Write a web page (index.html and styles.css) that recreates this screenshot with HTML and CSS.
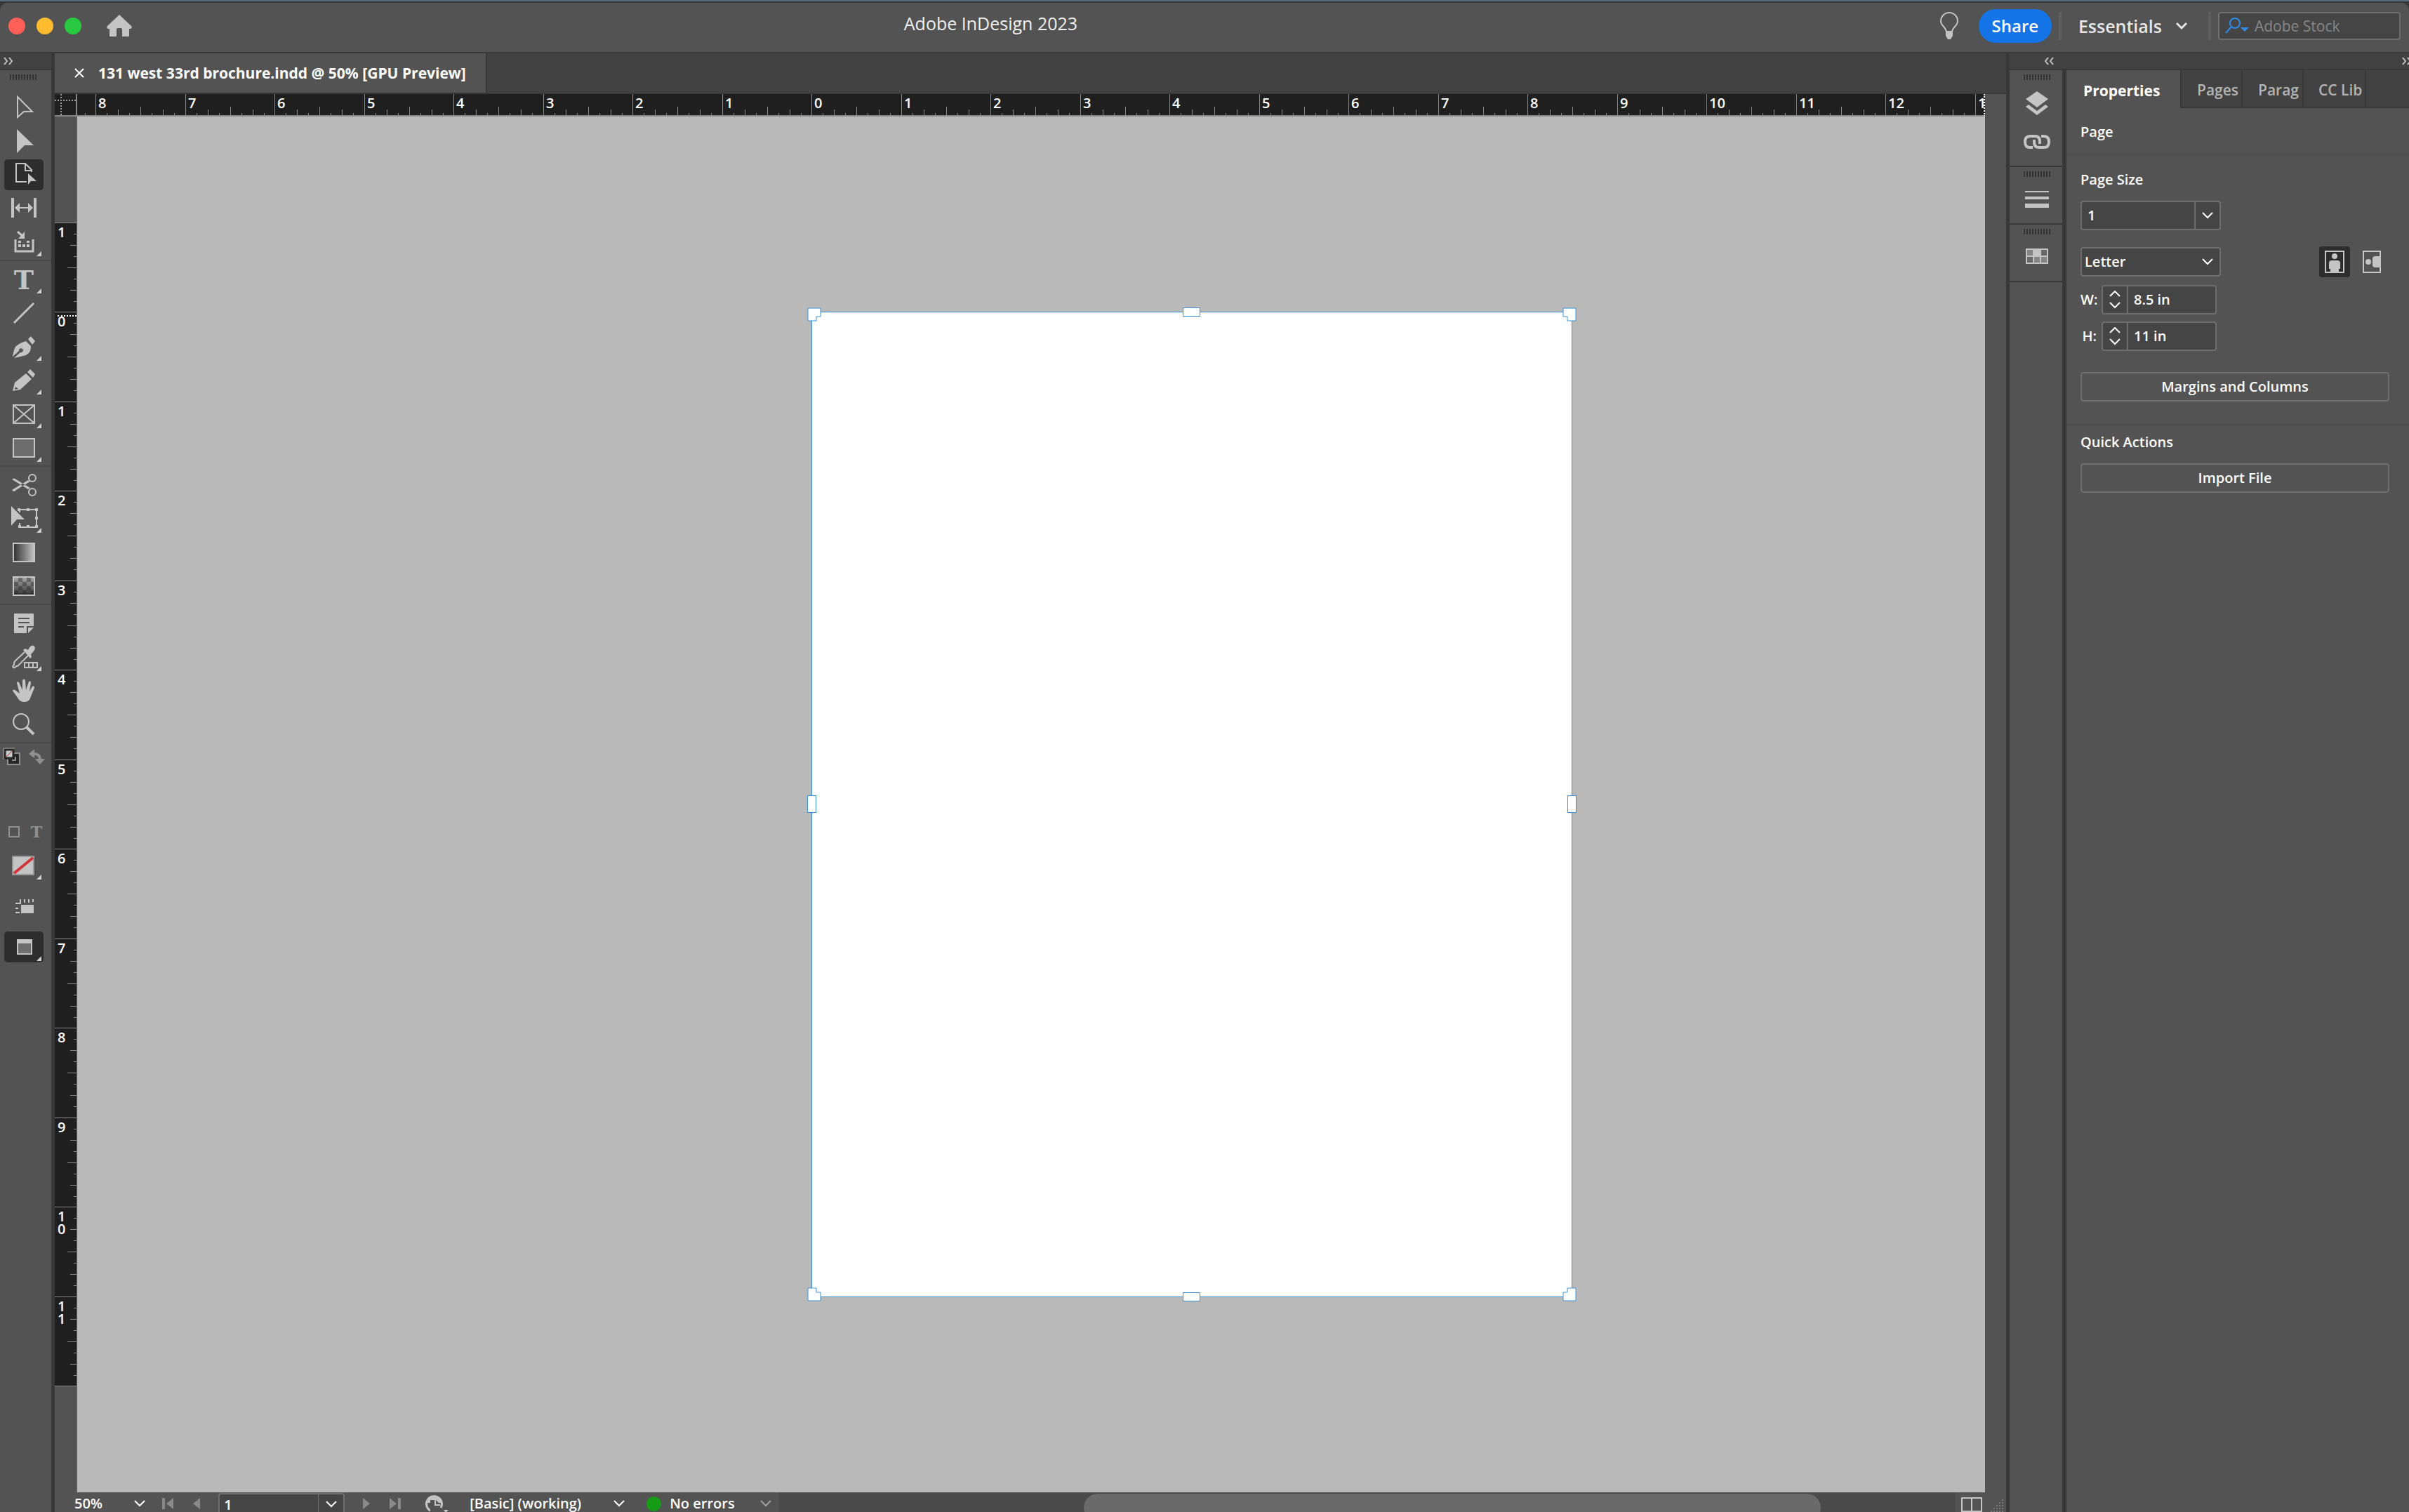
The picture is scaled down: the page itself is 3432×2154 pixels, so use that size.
FILE: index.html
```html
<!DOCTYPE html>
<html lang="en">
<head>
    <meta charset="UTF-8">
    <meta name="viewport" content="width=device-width, initial-scale=1.0">
    <title>Adobe InDesign 2023</title>
    <link rel="stylesheet" href="styles.css">
</head>
<body>
    <!-- Title bar -->
    <header class="titlebar">
        <div class="lights"><span class="light red"></span><span class="light yellow"></span><span class="light green"></span></div>
        <button class="icon-btn" aria-label="Home">
            <svg width="36" height="32" viewBox="0 0 36 32"><path fill="#c4c4c4" d="M18 0 35 16q2 3-1 4H32V30q0 1-1 1H23q-1 0-1-1V21q0-2-2-2H16q-2 0-2 2V30q0 1-1 1H5q-1 0-1-1V20H2q-3-1-1-4z"/></svg>
        </button>
        <h1 class="app-title">Adobe InDesign 2023</h1>
        <div class="titlebar-right">
            <button class="icon-btn bulb" aria-label="Learn">
                <svg width="28" height="40" viewBox="0 0 28 40"><path fill="none" stroke="#c4c4c4" stroke-width="2" d="M10 28C9 21 2 20 2 13a12 12 0 0 1 24 0C26 20 19 21 18 28z"/><path fill="#c4c4c4" d="M9 27H19V34L16 39H12L9 34z"/></svg>
            </button>
            <button class="share">Share</button>
            <span class="bar-line"></span>
            <button class="workspace">Essentials
                <svg width="16" height="12" viewBox="0 0 16 12"><path fill="none" stroke="#e6e6e6" stroke-width="3" d="M1 2 8 9 15 2"/></svg>
            </button>
            <span class="bar-line"></span>
            <label class="stock">
                <svg width="36" height="26" viewBox="0 0 36 26"><circle cx="14" cy="9" r="7" fill="none" stroke="#2d8ceb" stroke-width="2"/><path stroke="#2d8ceb" stroke-width="2" d="M9 14 1 23"/><path fill="#2d8ceb" d="M22 15H34L28 21z"/></svg>
                <input type="text" placeholder="Adobe Stock" aria-label="Adobe Stock">
            </label>
        </div>
    </header>

    <main class="workarea">
        <!-- Tools -->
        <nav class="tools" aria-label="Tools">
            <div class="strip"><svg width="14" height="12" viewBox="0 0 14 12"><path class="thin" d="M1 1 5 6 1 11M8 1 12 6 8 11"/></svg></div>
            <div class="grip"></div>
            <div class="tool-group first">
                <button class="tool" aria-label="Selection"><svg viewBox="0 0 56 44"><path class="ln" stroke-width="2" d="M19 7V36L28 28H40z"/></svg></button>
                <button class="tool" aria-label="Direct selection"><svg viewBox="0 0 56 44"><path class="fl" d="M18 5V39L29 28H42z"/></svg></button>
                <button class="tool active" aria-label="Page"><svg viewBox="0 0 56 44"><path class="ln" stroke-width="2" d="M32 32H17V6H30L39 15V18M30 6V16H40"/><path class="fl" d="M34 20V36L38 31H46z"/></svg></button>
                <button class="tool" aria-label="Gap"><svg viewBox="0 0 56 44"><path class="fl" d="M10 7H14V35H10zM42 7H46V35H42zM15 21 22 14V28zM41 21 34 14V28z"/><path class="ln" stroke-width="2" d="M20 21H36"/></svg></button>
                <button class="tool has-more" aria-label="Content collector"><svg viewBox="0 0 56 44"><path class="ln" stroke-width="3" d="M16 18V35H41V18M19 7 27 14"/><path class="fl" d="M29 7V17H20zM20 25H24V29H20zM26 25H30V29H26zM32 25H36V29H32zM20 20H24V23H20zM32 20H36V23H32z"/></svg></button>
            </div>
            <div class="tool-group">
                <button class="tool has-more" aria-label="Type"><svg viewBox="0 0 56 44"><text class="glyph" x="28" y="36" font-size="38">T</text></svg></button>
                <button class="tool" aria-label="Line"><svg viewBox="0 0 56 44"><path class="ln" stroke-width="3" d="M14 36 42 8"/></svg></button>
                <button class="tool has-more" aria-label="Pen"><svg viewBox="0 0 56 44"><path class="fl" d="M12 35C14 28 14 24 17 21Q23 16 31 14L38 21C38 28 36 31 31 34Q24 36 14 38L23 30A3 3 0 1 0 21 28L12 36zM34 11 38 7 44 14 40 19z"/></svg></button>
                <button class="tool has-more" aria-label="Pencil"><svg viewBox="0 0 56 44"><path class="fl" fill-rule="evenodd" d="M12 37 15 25 31 12 39 20 23 35zM16 31 15 35 20 34zM33 10 37 6 44 13 41 18z"/></svg></button>
                <button class="tool has-more" aria-label="Rectangle frame"><svg viewBox="0 0 56 44"><path class="ln" stroke-width="2" d="M13 9H43V35H13zL43 35M43 9 13 35"/></svg></button>
                <button class="tool has-more" aria-label="Rectangle"><svg viewBox="0 0 56 44"><path class="box" stroke-width="2" d="M13 9H43V35H13z"/></svg></button>
            </div>
            <div class="tool-group">
                <button class="tool" aria-label="Scissors"><svg viewBox="0 0 56 44"><path class="fl" d="M11 14Q14 11 17 14L37 26 34 28zM11 29Q14 33 17 29L37 17 34 15z"/><circle class="ln" stroke-width="2" cx="40" cy="12" r="5"/><circle class="ln" stroke-width="2" cx="40" cy="32" r="5"/></svg></button>
                <button class="tool has-more" aria-label="Free transform"><svg viewBox="0 0 56 44"><path class="ln" stroke-width="2" d="M21 9H46V34H22V28M22 9V13"/><path class="fl" d="M10 4V32L18 23H29zM19 7H23V11H19zM32 7H36V11H32zM44 7H48V11H44zM44 19H48V23H44zM44 31H48V35H44zM32 31H36V35H32zM20 31H24V35H20z"/></svg></button>
                <button class="tool" aria-label="Gradient swatch"><svg viewBox="0 0 56 44"><defs><linearGradient id="grad"><stop offset="0" stop-color="#303030"/><stop offset="1" stop-color="#c4c4c4"/></linearGradient></defs><rect fill="url(#grad)" stroke="#c4c4c4" stroke-width="2" x="13" y="9" width="30" height="26"/></svg></button>
                <button class="tool" aria-label="Gradient feather"><svg viewBox="0 0 56 44"><defs><linearGradient id="feather" x2="0" y2="1"><stop offset="0" stop-color="#aaa"/><stop offset="1" stop-color="#333"/></linearGradient></defs><rect fill="url(#feather)" stroke="#c4c4c4" stroke-width="2" x="13" y="9" width="30" height="26"/><path fill="#2d2d2d" fill-opacity=".45" d="M20 10H26V16H20zM32 10H38V16H32zM14 16H20V22H14zM26 16H32V22H26zM38 16H42V22H38zM20 22H26V28H20zM32 22H38V28H32zM14 28H20V34H14zM26 28H32V34H26zM38 28H42V34H38z"/></svg></button>
            </div>
            <div class="tool-group">
                <button class="tool" aria-label="Note"><svg viewBox="0 0 56 44"><path class="fl" fill-rule="evenodd" d="M15 8H41Q42 8 42 9V26H32V36H15Q14 36 14 35V9Q14 8 15 8zM20 14V16H36V14zM20 20V22H36V20zM20 26V28H28V26zM34 28H42L34 36z"/></svg></button>
                <button class="tool has-more" aria-label="Color theme"><svg viewBox="0 0 56 44"><path class="ln" stroke-width="2" d="M29 15 15 28Q14 30 14 33 11 36 13 37 15 38 17 35 20 35 21 33L34 20"/><path class="fl" d="M27 12 30 10 34 12Q38 4 42 6 46 9 41 15L38 18 39 22 37 24z"/><path class="ln" stroke-width="2" d="M29 30H47V37H29z"/><path class="fl" d="M34 30H36V37H34zM40 30H42V37H40z"/></svg></button>
                <button class="tool" aria-label="Hand"><svg viewBox="0 0 56 44"><path class="fl" d="M12 22Q13 19 17 22L22 26 18 11Q18 8 21 10L26 21 26 7Q28 4 30 7L31 21 35 9Q38 7 38 11L36 23 40 16Q43 14 43 18L38 30Q36 38 29 38 22 38 19 32z"/></svg></button>
                <button class="tool" aria-label="Zoom"><svg viewBox="0 0 56 44"><circle class="ln" stroke-width="2" cx="24" cy="18" r="11"/><path class="ln" stroke-width="4" d="M32 26 42 36"/></svg></button>
            </div>
            <div class="pair">
                <button class="icon-btn" aria-label="Default fill and stroke"><svg width="26" height="26" viewBox="0 0 26 26"><path fill="#262626" stroke="#909090" stroke-width="2" d="M7 8H24V24H7z"/><path stroke="#909090" stroke-width="2" fill="none" d="M13 18H18V13"/><path fill="#c8c8c8" stroke="#262626" stroke-width="3" d="M3 3H15V15H3z"/><path stroke="#b33" stroke-width="1" d="M4 14 14 4"/><path fill="none" stroke="#aaa" d="M1 17V1H17"/></svg></button>
                <button class="icon-btn" aria-label="Swap fill and stroke"><svg width="24" height="24" viewBox="0 0 24 24"><path fill="none" stroke="#8f8f8f" stroke-width="4" d="M7 8Q17 7 17 17"/><path fill="#8f8f8f" d="M1 8 9 1V14zM10 15H24L17 23z"/></svg></button>
            </div>
            <div class="pair lower">
                <button class="icon-btn" aria-label="Formatting affects container"><svg width="18" height="18" viewBox="0 0 18 18"><path fill="none" stroke="#8f8f8f" stroke-width="2" d="M2 2H16V16H2z"/></svg></button>
                <button class="icon-btn text-format" aria-label="Formatting affects text">T</button>
            </div>
            <div class="tool-group modes">
                <button class="tool has-more" aria-label="Apply none"><svg viewBox="0 0 56 44"><path fill="#c4c4c4" stroke="#999" stroke-width="2" d="M12 9H42V35H12z"/><path stroke="#d13438" stroke-width="4" d="M14 33 41 11"/></svg></button>
                <button class="tool" aria-label="View options"><svg viewBox="0 0 56 44"><path class="fl" d="M24 20H42V32H24zM16 17H22V12H24V19H16zM28 12H30V17H28zM34 12H36V17H34zM40 12H42V16H40zM16 24H20V26H16zM16 30H22V32H16z"/></svg></button>
                <button class="tool active has-more" aria-label="Screen mode"><svg viewBox="0 0 56 44"><path fill="#6d6d6d" stroke="#c4c4c4" stroke-width="2" d="M19 12H39V32H19z"/><path class="fl" d="M18 11H40V17H18z"/></svg></button>
            </div>
        </nav>

        <!-- Document window -->
        <section class="document">
            <div class="doc-tabs">
                <div class="doc-tab">
                    <button class="close" aria-label="Close"><svg width="14" height="14" viewBox="0 0 14 14"><path stroke="#fff" stroke-width="2" d="M1 1 13 13M13 1 1 13"/></svg></button>
                    <span>131 west 33rd brochure.indd @ 50% [GPU Preview]</span>
                </div>
            </div>
            <div class="view">
                <div class="ruler-corner"><svg width="30" height="30" viewBox="0 0 30 30"><path stroke="#999" stroke-width="2" stroke-dasharray="2 2" d="M0 9H30M9 0V30"/></svg></div>
                <div class="ruler-h">
                    <span class="lead"></span><span>8</span><span>7</span><span>6</span><span>5</span><span>4</span><span>3</span><span>2</span><span>1</span><span>0</span><span>1</span><span>2</span><span>3</span><span>4</span><span>5</span><span>6</span><span>7</span><span>8</span><span>9</span><span>10</span><span>11</span><span>12</span><span>1</span>
                </div>
                <div class="ruler-v">
                    <div class="ruler-v-scale">
                        <span>1</span><span class="origin">0</span><span>1</span><span>2</span><span>3</span><span>4</span><span>5</span><span>6</span><span>7</span><span>8</span><span>9</span><span>1<br>0</span><span>1<br>1</span>
                    </div>
                </div>
                <div class="canvas">
                    <div class="page">
                        <svg class="handle nw" viewBox="0 0 20 20"><path d="M1 1H19V13H13V19H1z"/></svg>
                        <svg class="handle ne" viewBox="0 0 20 20"><path d="M1 1H19V19H7V13H1z"/></svg>
                        <svg class="handle sw" viewBox="0 0 20 20"><path d="M1 1H13V7H19V19H1z"/></svg>
                        <svg class="handle se" viewBox="0 0 20 20"><path d="M7 1H19V19H1V7H7z"/></svg>
                        <i class="handle-bar n"></i><i class="handle-bar s"></i><i class="handle-bar side-bar w"></i><i class="handle-bar side-bar e"></i>
                    </div>
                </div>
            </div>
            <footer class="status">
                <div class="status-left">
                    <button class="zoom-level">50% <svg class="chev" viewBox="0 0 16 10"><path d="M1 1 8 8 15 1"/></svg></button>
                    <button class="icon-btn first-page" aria-label="First page"><svg width="16" height="16" viewBox="0 0 16 16"><path fill="#8a8a8a" d="M0 0H4V16H0zM16 0V16L6 8z"/></svg></button>
                    <button class="icon-btn" aria-label="Previous page"><svg width="10" height="16" viewBox="0 0 10 16"><path fill="#8a8a8a" d="M10 0V16L0 8z"/></svg></button>
                    <div class="page-box">
                        <input type="text" value="1" aria-label="Page number">
                        <button aria-label="Choose page"><svg class="chev" viewBox="0 0 16 10"><path d="M1 1 8 8 15 1"/></svg></button>
                    </div>
                    <button class="icon-btn" aria-label="Next page"><svg width="10" height="16" viewBox="0 0 10 16"><path fill="#8a8a8a" d="M0 0V16L10 8z"/></svg></button>
                    <button class="icon-btn last-page" aria-label="Last page"><svg width="16" height="16" viewBox="0 0 16 16"><path fill="#8a8a8a" d="M12 0H16V16H12zM0 0V16L10 8z"/></svg></button>
                    <button class="icon-btn open-bridge" aria-label="Reveal file"><svg width="34" height="26" viewBox="0 0 34 26"><path fill="none" stroke="#c4c4c4" stroke-width="3" d="M8 23A11 11 0 1 1 23 19"/><path fill="#c4c4c4" d="M4 8Q13-3 23 8L24 12H4z"/><path fill="#535353" d="M8 8H16L22 14V26H8z"/><path fill="none" stroke="#c4c4c4" stroke-width="2" d="M15 8V15H22"/><path fill="#c4c4c4" d="M27 22H34L30 26z"/></svg></button>
                    <button class="profile">[Basic] (working) <svg class="chev" viewBox="0 0 16 10"><path d="M1 1 8 8 15 1"/></svg></button>
                    <button class="preflight"><span class="ok"></span>No errors <svg class="chev dim" viewBox="0 0 16 10"><path d="M1 1 8 8 15 1"/></svg></button>
                </div>
                <div class="scroll-h"><div class="thumb"></div></div>
                <div class="status-right">
                    <button class="icon-btn" aria-label="Split layout"><svg width="30" height="22" viewBox="0 0 30 22"><path fill="none" stroke="#c4c4c4" stroke-width="2" d="M1 2H29V21H1zM15 2V21"/></svg></button>
                    <svg width="18" height="18" viewBox="0 0 18 18"><path stroke="#777" stroke-width="2" stroke-dasharray="2 2" d="M17 0V18M13 4V18M9 8V18M5 12V18M1 16V18"/></svg>
                </div>
            </footer>
        </section>

        <!-- Collapsed panels and properties -->
        <aside class="side">
            <div class="strip side-strip">
                <svg width="14" height="12" viewBox="0 0 14 12"><path class="thin" d="M6 1 2 6 6 11M13 1 9 6 13 11"/></svg>
                <svg width="10" height="12" viewBox="0 0 10 12"><path class="thin" d="M1 1 5 6 1 11M8 1 12 6 8 11"/></svg>
            </div>
            <div class="side-body">
                <div class="dock">
                    <div class="dock-group tall">
                        <div class="grip"></div>
                        <button class="icon-btn" aria-label="Layers"><svg width="34" height="34" viewBox="0 0 34 34"><path fill="#c4c4c4" d="M17 0 33 11 17 23 1 11zM1 22 5 19 17 28 29 19 33 22 17 34z"/></svg></button>
                        <button class="icon-btn" aria-label="Links"><svg width="38" height="20" viewBox="0 0 38 20"><path fill="none" stroke="#c4c4c4" stroke-width="4" d="M13 18H9Q2 18 2 10T9 2H16Q23 2 23 9V13M25 2H29Q36 2 36 10T29 18H22Q15 18 15 11V7"/></svg></button>
                    </div>
                    <div class="dock-group">
                        <div class="grip"></div>
                        <button class="icon-btn" aria-label="Stroke"><svg width="34" height="24" viewBox="0 0 34 24"><path fill="#c4c4c4" d="M0 0H34V2H0zM0 8H34V12H0zM0 18H34V24H0z"/></svg></button>
                    </div>
                    <div class="dock-group">
                        <div class="grip"></div>
                        <button class="icon-btn" aria-label="Swatches"><svg width="32" height="22" viewBox="0 0 32 22"><path fill="#c4c4c4" d="M0 0H32V22H0z"/><path fill="#858585" d="M2 2H10V10H2zM12 12H20V20H12zM22 12H30V20H22z"/><path fill="#686868" d="M22 2H30V10H22zM2 12H10V20H2z"/></svg></button>
                    </div>
                </div>
                <div class="panel">
                    <div class="panel-tabs">
                        <button class="panel-tab selected">Properties</button><button class="panel-tab">Pages</button><button class="panel-tab">Parag</button><button class="panel-tab wide">CC Lib</button>
                    </div>
                    <h2 class="panel-head">Page</h2>
                    <div class="panel-section">
                        <h3>Page Size</h3>
                        <div class="combo field">
                            <input type="text" value="1" aria-label="Page">
                            <button aria-label="Choose page"><svg class="chev" viewBox="0 0 16 10"><path d="M1 1 8 8 15 1"/></svg></button>
                        </div>
                        <div class="preset-row">
                            <select class="field preset" aria-label="Page preset"><option>Letter</option></select>
                            <div class="orient">
                                <button class="orient-btn active" aria-label="Portrait"><svg width="28" height="32" viewBox="0 0 28 32"><path fill="none" stroke="#c4c4c4" stroke-width="2" d="M1 1H27V31H1z"/><circle cx="14" cy="8" r="4" fill="#c4c4c4"/><path fill="#c4c4c4" d="M10 14H18Q22 14 22 18V26H20V31H8V26H6V18Q6 14 10 14z"/></svg></button>
                                <button class="orient-btn" aria-label="Landscape"><svg width="26" height="32" viewBox="0 0 26 32"><path fill="none" stroke="#c4c4c4" stroke-width="2" d="M1 1H25V31H1z"/><circle cx="8" cy="16" r="4" fill="#c4c4c4"/><path fill="#c4c4c4" d="M25 8H18Q14 8 14 12V20Q14 24 18 24H25z"/></svg></button>
                            </div>
                        </div>
                        <div class="size-row">
                            <label for="page-w">W:</label>
                            <div class="field stepper">
                                <div class="steps"><button aria-label="Increase width"><svg class="chev" viewBox="0 0 16 10"><path d="M1 8 8 1 15 8"/></svg></button><button aria-label="Decrease width"><svg class="chev" viewBox="0 0 16 10"><path d="M1 1 8 8 15 1"/></svg></button></div>
                                <input id="page-w" type="text" value="8.5 in">
                            </div>
                        </div>
                        <div class="size-row">
                            <label for="page-h">H:</label>
                            <div class="field stepper">
                                <div class="steps"><button aria-label="Increase height"><svg class="chev" viewBox="0 0 16 10"><path d="M1 8 8 1 15 8"/></svg></button><button aria-label="Decrease height"><svg class="chev" viewBox="0 0 16 10"><path d="M1 1 8 8 15 1"/></svg></button></div>
                                <input id="page-h" type="text" value="11 in">
                            </div>
                        </div>
                        <button class="wide-btn margins">Margins and Columns</button>
                    </div>
                    <div class="panel-section">
                        <h3>Quick Actions</h3>
                        <button class="wide-btn">Import File</button>
                    </div>
                </div>
            </div>
        </aside>
    </main>
</body>
</html>
```
FILE: styles.css
```css
* { box-sizing: border-box; }
body { margin: 0; height: 100vh; display: flex; flex-direction: column; overflow: hidden; background: #383838; color: #fff; font: 600 20px/24px "Open Sans", "Noto Sans", sans-serif; border-top: 2px solid #55697f; }
button, input, select { font: inherit; color: inherit; }
button { margin: 0; padding: 0; border: none; background: none; cursor: pointer; }
svg { display: block; flex: none; }
h1, h2, h3 { margin: 0; font: inherit; }
.icon-btn { flex: none; }

/* Title bar */
.titlebar { height: 72px; margin-top: 2px; padding: 0 12px 4px; display: flex; align-items: center; background: #535353; border-bottom: 2px solid #383838; border-radius: 10px 10px 0 0; flex: none; }
.lights { display: flex; gap: 16px; margin-right: 36px; }
.light { width: 24px; height: 24px; border-radius: 50%; }
.red { background: #ff5f57; }
.yellow { background: #febc2e; }
.green { background: #28c840; }
.app-title { margin: 0 auto; padding-bottom: 8px; font-size: 25px; font-weight: 500; color: #f0f0f0; }
.titlebar-right { display: flex; align-items: center; padding-left: 128px; }
.bulb { margin-right: 28px; }
.share { width: 104px; height: 48px; border-radius: 24px; background: #1473e6; font-size: 24px; margin-right: 10px; }
.bar-line { width: 4px; height: 40px; background: #5e5e5e; }
.workspace { display: flex; align-items: center; gap: 20px; margin: 0 30px 0 24px; font-size: 25px; color: #e6e6e6; }
.stock { width: 260px; height: 40px; margin-left: 10px; padding-left: 8px; display: flex; align-items: center; gap: 6px; border: 2px solid #6e6e6e; border-radius: 4px; background: #454545; }
.stock input { width: 100%; min-width: 0; padding: 0; border: none; background: none; outline: none; font-size: 21px; font-weight: 500; }
.stock input::placeholder { color: #878787; }

.workarea { flex: 1; min-height: 0; display: flex; gap: 5px; }
.strip { height: 24px; padding: 0 5px; display: flex; align-items: center; background: #424242; border-bottom: 2px solid #383838; }
.thin { fill: none; stroke: #c4c4c4; stroke-width: 2; }
.grip { width: 38px; height: 8px; background: repeating-linear-gradient(to right, #333 0 2px, #535353 2px 4px); }

/* Tools */
.tools { width: 73px; flex: none; background: #535353; }
.tools > .grip { margin: 6px 0 0 14px; }
.tool-group { display: flex; flex-direction: column; gap: 4px; padding: 4px 6px 3px; border-bottom: 2px solid #4a4a4a; }
.tool-group.first { padding-top: 17px; }
.tool { position: relative; width: 56px; height: 44px; border-radius: 5px; }
.tool svg { width: 56px; height: 44px; }
.tool.active { background: #2d2d2d; }
.tool.has-more::after { content: ""; position: absolute; right: 3px; bottom: 2px; border-style: solid; border-width: 0 0 7px 7px; border-color: transparent transparent #d0d0d0 transparent; }
.ln { fill: none; stroke: #c4c4c4; }
.fl { fill: #c4c4c4; }
.box { fill: #6d6d6d; stroke: #c4c4c4; }
.glyph { fill: #c4c4c4; font-family: "DejaVu Serif", serif; font-weight: bold; text-anchor: middle; }
.pair { display: flex; align-items: center; justify-content: space-between; padding: 6px 9px 0 4px; }
.pair.lower { padding: 82px 13px 0 11px; }
.text-format { font: bold 22px/24px "DejaVu Serif", serif; color: #8f8f8f; }
.modes { gap: 14px; padding-top: 14px; border: none; }

/* Document window */
.document { flex: 1; min-width: 0; display: flex; flex-direction: column; background: #535353; }
.doc-tabs { height: 58px; flex: none; display: flex; background: #424242; border-bottom: 2px solid #383838; }
.doc-tab { display: flex; align-items: center; gap: 20px; padding: 0 28px; background: #535353; border-right: 2px solid #383838; font-size: 21px; font-weight: 700; white-space: nowrap; }
.view { flex: 1; min-height: 0; display: grid; grid-template-columns: 32px 1fr; grid-template-rows: 32px 1fr; padding-right: 30px; }
.ruler-corner { background: #1f1f1f; border-right: 2px solid #888; border-bottom: 2px solid #888; }
.ruler-h { display: flex; overflow: hidden; background: #1f1f1f; border-bottom: 2px solid #888; border-right: 2px dotted #fff; }
.ruler-h span { flex: none; width: 128px; padding: 0 4px; line-height: 26px; background: linear-gradient(to right, #888 1px, transparent 1px) 0 100% / 16px 3px repeat-x, linear-gradient(to right, #888 1px, transparent 1px) 0 100% / 32px 8px repeat-x, linear-gradient(to right, #888 1px, transparent 1px) 0 100% / 64px 12px repeat-x, linear-gradient(to right, #888 1px, transparent 1px) 0 0 / 128px 100% repeat-x; }
.ruler-h span:nth-child(odd) { width: 127px; }
.ruler-h .lead { margin-left: -101px; }
.ruler-v { padding-top: 151px; border-right: 1px solid #666; }
.ruler-v-scale { display: flex; flex-direction: column; background: #1f1f1f; border-bottom: 1px solid #888; }
.ruler-v span { height: 128px; padding: 5px 0 0 4px; line-height: 18px; background: linear-gradient(#888 1px, transparent 1px) 100% 0 / 4px 16px repeat-y, linear-gradient(#888 1px, transparent 1px) 100% 0 / 9px 32px repeat-y, linear-gradient(#888 1px, transparent 1px) 100% 0 / 13px 64px repeat-y, linear-gradient(#888 1px, transparent 1px) 0 0 / 100% 128px repeat-y; }
.ruler-v span:nth-child(odd) { height: 127px; }
.ruler-v .origin::before { content: ""; display: block; height: 0; margin-bottom: -2px; border-top: 2px dotted #fff; }
.canvas { position: relative; overflow: hidden; background: #b9b9b9; }
.page { position: absolute; left: 1046px; top: 278px; width: 1084px; height: 1404px; background: #fff; border: 1px solid #3a92d6; }
.handle { position: absolute; width: 20px; height: 20px; fill: #fff; stroke: #3a92d6; }
.nw { left: -7px; top: -7px; }
.ne { right: -7px; top: -7px; }
.sw { left: -7px; bottom: -7px; }
.se { right: -7px; bottom: -7px; }
.handle-bar { position: absolute; left: calc(50% - 13px); width: 25px; height: 13px; background: #fff; border: 1px solid #3a92d6; }
.handle-bar.side-bar { left: auto; top: calc(50% - 13px); width: 13px; height: 25px; }
.n { top: -7px; }
.s { bottom: -7px; }
.handle-bar.w { left: -7px; }
.e { right: -7px; }

/* Status bar */
.status { height: 28px; flex: none; display: flex; overflow: hidden; }
.status-left { display: flex; align-items: center; padding: 4px 11px 0 28px; }
.status button { display: flex; align-items: center; white-space: nowrap; }
.chev { width: 16px; height: 10px; fill: none; stroke: #fff; stroke-width: 2; }
.chev.dim { stroke: #a0a0a0; }
.zoom-level { gap: 45px; margin-right: 24px; }
.first-page { margin-right: 28px; }
.page-box { align-self: flex-start; display: flex; width: 180px; height: 32px; margin: -3px 26px 0; border: 2px solid #6e6e6e; border-radius: 4px; background: #454545; }
.page-box input { flex: 1; min-width: 0; padding: 2px 6px 0; border: none; background: none; }
.page-box button { width: 36px; justify-content: center; border-left: 1px solid #6e6e6e; }
.last-page { margin: 0 34px 0 28px; }
.open-bridge { margin-right: 30px; }
.profile { gap: 46px; margin-right: 31px; }
.preflight .ok { width: 21px; height: 21px; margin-right: 12px; border-radius: 50%; background: #169c16; }
.preflight .chev { margin-left: 36px; }
.scroll-h { flex: 1; padding-top: 2px; background: #4a4a4a; }
.thumb { width: 1050px; height: 40px; margin-left: 434px; border-radius: 20px; background: #6a6a6a; }
.status-right { display: flex; align-items: flex-end; gap: 12px; padding: 0 4px 0 9px; }

/* Right side */
.side { width: 569px; flex: none; display: flex; flex-direction: column; }
.side-strip { justify-content: space-between; padding: 0 0 0 49px; flex: none; }
.side-body { flex: 1; display: flex; gap: 6px; }
.dock { width: 75px; background: #535353; }
.dock-group { height: 82px; padding: 6px 0 0 3px; display: flex; flex-direction: column; align-items: center; gap: 20px; border-bottom: 2px solid #383838; }
.dock-group.tall { height: 138px; }
.dock-group.tall .icon-btn:first-of-type { margin: -4px 0 8px; }
.panel { flex: 1; min-width: 0; background: #535353; }
.panel-tabs { height: 54px; flex: none; display: flex; background: #424242; font-size: 21px; }
.panel-tab { width: 87px; height: 54px; padding: 4px 0 0 22px; overflow: hidden; text-align: left; white-space: nowrap; color: #b4b4b4; border-right: 2px solid #383838; border-bottom: 2px solid #383838; }
.panel-tabs::after { content: ""; flex: 1; border-bottom: 2px solid #383838; }
.panel-tab.wide { width: 89px; padding-left: 21px; }
.panel-tab.selected { width: 164px; padding-left: 24px; background: #535353; border-bottom: none; color: #fff; font-weight: 700; }
.panel-head { padding: 22px 20px 18px; border-bottom: 4px solid #4e4e4e; }
.panel-section { padding: 22px 28px 31px 20px; border-bottom: 4px solid #4e4e4e; }
.panel-section:last-child { padding-top: 11px; border: none; }
.panel-section h3 { margin-bottom: 18px; }
.field { width: 200px; height: 42px; border: 2px solid #6e6e6e; border-radius: 4px; background: #454545; overflow: hidden; }
.field input { flex: 1; min-width: 0; padding: 0 8px; border: none; background: none; }
.combo { display: flex; margin-bottom: 23px; }
.combo button { width: 36px; padding-left: 9px; border-left: 2px solid #6e6e6e; }
.preset-row { display: flex; align-items: center; justify-content: space-between; margin-bottom: 11px; }
.preset { appearance: none; padding: 0 4px; background: #454545 url("data:image/svg+xml,%3Csvg xmlns='http://www.w3.org/2000/svg' width='16' height='10'%3E%3Cpath d='M1 1 8 8 15 1' fill='none' stroke='white' stroke-width='2'/%3E%3C/svg%3E") no-repeat right 9px center; }
.orient { display: flex; gap: 9px; margin-right: 3px; }
.orient-btn { width: 44px; height: 44px; display: flex; align-items: center; justify-content: center; border-radius: 4px; }
.orient-btn.active { background: #2d2d2d; }
.size-row { display: flex; align-items: center; margin-bottom: 10px; }
.size-row label { width: 30px; padding-right: 7px; text-align: right; }
.stepper { display: flex; width: 164px; }
.steps { width: 36px; display: flex; flex-direction: column; align-items: center; justify-content: space-evenly; border-right: 2px solid #6e6e6e; }
.wide-btn { width: 100%; height: 42px; border: 2px solid #6e6e6e; border-radius: 4px; }
.margins { margin-top: 20px; }
```
